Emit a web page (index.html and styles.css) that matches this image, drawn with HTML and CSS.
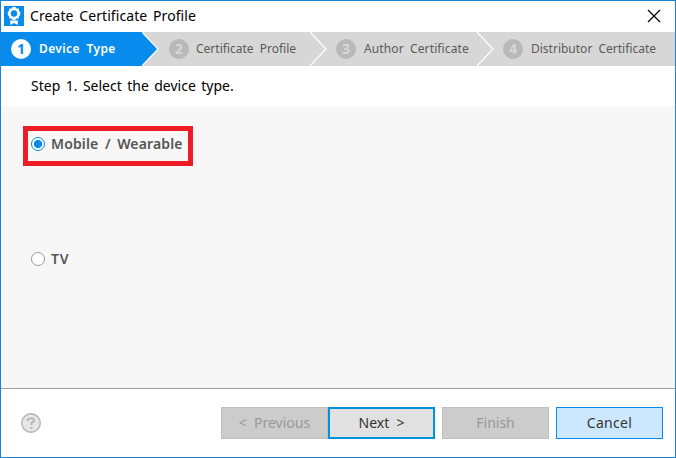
FILE: index.html
```html
<!DOCTYPE html>
<html lang="en">
<head>
<meta charset="utf-8">
<title>Create Certificate Profile</title>
<link rel="stylesheet" href="styles.css">
</head>
<body>
<main class="dialog">
  <header class="titlebar">
    <svg class="logo" width="20" height="20" viewBox="0 0 20 20"><rect width="20" height="20" fill="#078bed"/><path d="M6 14.500h8L13.500 19 10 17l-3.500 2z" fill="#fff"/><path d="M8.500 1h3l.8 1.500 2.400.1.200 2.200L16.200 6v3l-1.300 1.200-.2 2.200-2.400.1-.8 1.500h-3l-.8-1.500-2.400-.1-.2-2.200L3.800 9V6l1.300-1.200.2-2.200 2.400-.1z" fill="#fff"/><circle cx="10" cy="7.500" r="3.200" fill="#078bed"/></svg>
    <h1 class="title">Create Certificate Profile</h1>
    <svg class="close" width="14" height="14" viewBox="0 0 14 14"><path d="M1 1l12 12M13 1L1 13" stroke="#000" stroke-width="1.200"/></svg>
  </header>
  <nav class="steps">
    <div class="step active"><span class="num">1</span><span class="label l1">Device Type</span></div>
    <svg class="chevron" width="17" height="34" viewBox="0 0 17 34"><path d="M0 0L16 17 0 34z" fill="#078bed"/><path d="M0 0L16 17 0 34" fill="none" stroke="#fff" stroke-width="1.200"/></svg>
    <div class="step s2"><span class="num">2</span><span class="label l2">Certificate Profile</span></div>
    <svg class="chevron" width="17" height="34" viewBox="0 0 17 34"><path d="M0 0L16 17 0 34" fill="none" stroke="#fff" stroke-width="1.200"/></svg>
    <div class="step s3"><span class="num">3</span><span class="label l3">Author Certificate</span></div>
    <svg class="chevron" width="17" height="34" viewBox="0 0 17 34"><path d="M0 0L16 17 0 34" fill="none" stroke="#fff" stroke-width="1.200"/></svg>
    <div class="step s4"><span class="num">4</span><span class="label l4">Distributor Certificate</span></div>
  </nav>
  <p class="instruction"><span>Step 1. Select the device type.</span></p>
  <section class="content">
    <div class="option selected"><span class="radio checked"></span><span class="mobile">Mobile / Wearable</span></div>
    <div class="option tv"><span class="radio"></span><span>TV</span></div>
  </section>
  <footer class="footer">
    <svg class="help" width="20" height="20" viewBox="0 0 20 20"><circle cx="10" cy="10" r="9.300" fill="#e6e6e6" stroke="#b4b4b4" stroke-width="1.400"/><path d="M7 8V6.500L8 5.500h4l1 1V8l-2.500 2v2" fill="none" stroke="#b0b0b0" stroke-width="1.700"/><path d="M9.500 14h2v2h-2z" fill="#b0b0b0"/></svg>
    <div class="buttons">
      <button class="btn off" disabled><span class="prev">&lt; Previous</span></button><button class="btn next"><span>Next &gt;</span></button>
      <button class="btn off finish" disabled><span>Finish</span></button>
      <button class="btn cancel"><span>Cancel</span></button>
    </div>
  </footer>
</main>
</body>
</html>
```
FILE: styles.css
```css
* { box-sizing: border-box; }
body { margin: 0; font-family: "Noto Sans", "Open Sans", sans-serif; }
.dialog { width: 676px; height: 458px; border: 1px solid #1883d7; background: #fff; display: flex; flex-direction: column; }
.titlebar { height: 31px; display: flex; align-items: flex-start; padding: 5px 14px 0 3px; }
.title { margin: 0 auto 0 6px; font-size: 14px; font-weight: 400; line-height: 20px; color: #000; white-space: nowrap; word-spacing: 2px; letter-spacing: 0.08px; }
.close { margin-top: 3px; }
.steps { height: 34px; background: #d7d7d7; display: flex; overflow: hidden; }
.step { display: flex; align-items: center; flex: none; white-space: nowrap; color: #5a5a5a; font-size: 12px; }
.active { width: 141px; padding-left: 10px; background: #078bed; color: #fff; font-weight: 600; }
.s2 { width: 151px; padding-left: 10px; }
.s3 { width: 150px; padding-left: 9px; }
.s4 { padding-left: 9px; }
.chevron { flex: none; display: block; }
.num { width: 20px; height: 20px; border-radius: 50%; background: #b9b9b9; color: #d7d7d7; font: 700 14px/20px "Noto Sans", sans-serif; text-align: center; }
.active .num { background: #fff; color: #078bed; }
.label { margin-left: 8px; line-height: 18px; word-spacing: 3px; }
.l1 { letter-spacing: 0.4px; }
.l2 { margin-left: 7px; }
.l3 { letter-spacing: 0.12px; }
.instruction { margin: 0; height: 40px; padding: 10px 0 0 30px; font-size: 14px; line-height: 20px; color: #000; word-spacing: 1.8px; }
.content { height: 282px; background: #f7f7f7; padding: 20px 22px 0; }
.option { display: flex; align-items: center; font-size: 14px; font-weight: 600; color: #555; line-height: 20px; white-space: nowrap; letter-spacing: 0.15px; word-spacing: 2.700px; }
.selected { width: 170px; height: 40px; border: 5px solid #ee1c25; padding: 0 0 5px 3px; }
.radio { width: 14px; height: 14px; border: 1px solid #999; border-radius: 50%; background: #fff; margin-right: 6px; flex: none; }
.checked { border-color: #078bed; background: radial-gradient(circle, #078bed 3.700px, #fff 4.500px); }
.tv { margin-top: 83px; padding-left: 8px; }
.tv span:last-child { letter-spacing: 0.8px; }
.footer { flex: 1; border-top: 1px solid #a0a0a0; display: flex; justify-content: space-between; padding: 18px 12px 0 20px; }
.help { margin-top: 6px; }
.buttons { display: flex; }
.btn { width: 107px; height: 32px; padding: 0; border: 1px solid #bfbfbf; background: #ccc; color: #999; font: 400 14px/20px "Noto Sans", sans-serif; word-spacing: 3.500px; }
.next { border: 2px solid #0092dc; background: #e1e1e1; color: #333; }
.finish { margin-left: 7px; }
.cancel { margin-left: 7px; border-color: #078bed; background: #cce8ff; color: #333; letter-spacing: 0.3px; }
```
